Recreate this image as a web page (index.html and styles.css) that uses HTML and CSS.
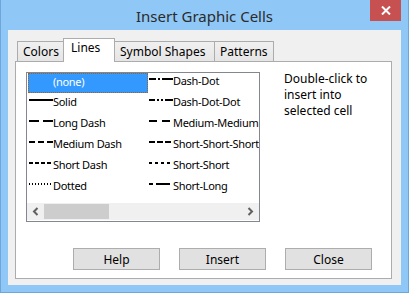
FILE: index.html
```html
<!DOCTYPE html>
<html lang="en">
<head>
  <meta charset="UTF-8" />
  <title>Insert Graphic Cells</title>
  <link rel="stylesheet" href="styles.css">
</head>
<body>
  <div class="window">
    <div class="titlebar">
      <span></span>
      <div class="title">Insert Graphic Cells</div>
      <div class="close-btn">
        <svg width="10" height="9" viewBox="0 0 10 9"><path d="M1 0.5 L9 8.5 M9 0.5 L1 8.5" stroke="#fff" stroke-width="2"/></svg>
      </div>
    </div>
    <div class="client">
      <div class="tabs">
        <div class="tab tab-colors">Colors</div>
        <div class="tab tab-lines active">Lines</div>
        <div class="tab tab-symbols">Symbol Shapes</div>
        <div class="tab tab-patterns">Patterns</div>
      </div>
      <div class="panel">
        <div class="panel-top">
          <div class="listbox">
            <div class="list-cols">
              <div class="col">
                <div class="item selected"><span class="sample"></span>(none)</div>
                <div class="item"><svg class="sample" width="25" height="4"><line x1="1" y1="2" x2="25" y2="2" stroke="#000" stroke-width="2"/></svg>Solid</div>
                <div class="item"><svg class="sample" width="25" height="4"><line x1="1" y1="2" x2="25" y2="2" stroke="#000" stroke-width="2" stroke-dasharray="10 4"/></svg>Long Dash</div>
                <div class="item"><svg class="sample" width="25" height="4"><line x1="1" y1="2" x2="25" y2="2" stroke="#000" stroke-width="2" stroke-dasharray="6 3"/></svg>Medium Dash</div>
                <div class="item"><svg class="sample" width="25" height="4"><line x1="1" y1="2" x2="25" y2="2" stroke="#000" stroke-width="2" stroke-dasharray="4 2"/></svg>Short Dash</div>
                <div class="item"><svg class="sample" width="25" height="4"><line x1="1" y1="2" x2="25" y2="2" stroke="#000" stroke-width="2" stroke-dasharray="1 2"/></svg>Dotted</div>
              </div>
              <div class="col">
                <div class="item"><svg class="sample" width="25" height="4"><line x1="1" y1="2" x2="25" y2="2" stroke="#000" stroke-width="2" stroke-dasharray="7 2 2 2 11"/></svg>Dash-Dot</div>
                <div class="item"><svg class="sample" width="25" height="4"><line x1="1" y1="2" x2="25" y2="2" stroke="#000" stroke-width="2" stroke-dasharray="6 2 2 2 2 2 10"/></svg>Dash-Dot-Dot</div>
                <div class="item"><svg class="sample" width="25" height="4"><line x1="1" y1="2" x2="25" y2="2" stroke="#000" stroke-width="2" stroke-dasharray="8 5"/></svg>Medium-Medium</div>
                <div class="item"><svg class="sample" width="25" height="4"><line x1="1" y1="2" x2="25" y2="2" stroke="#000" stroke-width="2" stroke-dasharray="6 2"/></svg>Short-Short-Short</div>
                <div class="item"><svg class="sample" width="25" height="4"><line x1="1" y1="2" x2="25" y2="2" stroke="#000" stroke-width="2" stroke-dasharray="3 3"/></svg>Short-Short</div>
                <div class="item"><svg class="sample" width="25" height="4"><line x1="1" y1="2" x2="25" y2="2" stroke="#000" stroke-width="2" stroke-dasharray="4 3 14 4"/></svg>Short-Long</div>
              </div>
            </div>
            <div class="hscroll">
              <div class="arrow">
                <svg width="7" height="9" viewBox="0 0 7 9"><path d="M5.5 1 L2 4.5 L5.5 8" fill="none" stroke="#606060" stroke-width="2"/></svg>
              </div>
              <div class="track"><div class="thumb"></div></div>
              <div class="arrow">
                <svg width="7" height="9" viewBox="0 0 7 9"><path d="M1.5 1 L5 4.5 L1.5 8" fill="none" stroke="#606060" stroke-width="2"/></svg>
              </div>
            </div>
          </div>
          <p class="hint">Double-click to insert into selected cell</p>
        </div>
        <div class="buttons">
          <div class="btn">Help</div>
          <div class="btn">Insert</div>
          <div class="btn">Close</div>
        </div>
      </div>
    </div>
  </div>
</body>
</html>
```

FILE: styles.css
```css
* {
  box-sizing: border-box;
  margin: 0;
  padding: 0;
}

body {
  font-family: 'Noto Sans', 'Liberation Sans', sans-serif;
  font-size: 12px;
  color: #000;
  background: #8fc7f6;
}

.window {
  width: 409px;
  height: 293px;
  background: #8fc7f6;
  border: 1px solid #6fa6d9;
  border-top: none;
  padding: 0 7px 7px 7px;
}

.titlebar {
  height: 30px;
  display: grid;
  grid-template-columns: 1fr auto 1fr;
  align-items: start;
}

.title {
  font-size: 15px;
  color: #2b2b2b;
  padding-top: 6px;
  line-height: 20px;
}

.close-btn {
  justify-self: end;
  width: 31px;
  height: 21px;
  background: #c75050;
  display: flex;
  align-items: center;
  justify-content: center;
}

.client {
  height: 255px;
  background: #f0f0f0;
  padding: 9px 9px 0 7px;
}

.tabs {
  display: flex;
  align-items: flex-end;
  padding-left: 2px;
  height: 23px;
  margin-bottom: -1px;
  position: relative;
  z-index: 1;
}

.tab {
  height: 20px;
  border: 1px solid #acacac;
  border-bottom: none;
  background: linear-gradient(#f0f0f0, #e5e5e5);
  line-height: 18px;
  padding: 1px 0 0 5px;
  margin-bottom: 1px;
}

.tab + .tab {
  margin-left: -1px;
}

.tab-colors { width: 47px; }
.tab-lines { width: 52px; }
.tab-symbols { width: 101px; }
.tab-patterns { width: 60px; }

.tab.active {
  height: 24px;
  background: #fff;
  margin-bottom: 0;
  line-height: 18px;
  padding: 0 0 0 7px;
  position: relative;
  z-index: 2;
}

.panel {
  width: 377px;
  height: 218px;
  background: #fff;
  border: 1px solid #acacac;
  padding: 10px 0 0 10px;
}

.panel-top {
  display: flex;
  gap: 24px;
  height: 176px;
}

.listbox {
  width: 234px;
  height: 150px;
  border: 1px solid #828790;
  padding-left: 1px;
  display: flex;
  flex-direction: column;
}

.list-cols {
  display: flex;
  overflow: hidden;
  height: 130px;
}

.col {
  flex: 0 0 120px;
}

.item {
  height: 21px;
  line-height: 15px;
  font-size: 11px;
  letter-spacing: -0.3px;
  display: flex;
  align-items: flex-start;
  white-space: nowrap;
  overflow: hidden;
}

.item .sample {
  margin-top: 4px;
}

.item.selected {
  height: 20px;
  margin-bottom: 1px;
  padding-top: 1px;
  background: #3399ff;
  color: #fff;
  outline: 1px dotted #a06020;
  outline-offset: -1px;
}

.sample {
  display: block;
  flex: 0 0 25px;
  width: 25px;
}

.hscroll {
  height: 17px;
  margin-top: auto;
  margin-bottom: 1px;
  margin-left: -1px;
  background: #f0f0f0;
  display: flex;
}

.arrow {
  width: 17px;
  display: flex;
  align-items: center;
  justify-content: center;
}

.track {
  flex: 1;
  padding: 1px 0;
}

.thumb {
  width: 65px;
  height: 15px;
  background: #cdcdcd;
}

.hint {
  line-height: 16px;
  width: 90px;
  margin-top: -1px;
}

.buttons {
  display: flex;
  gap: 19px;
  padding-left: 47px;
}

.btn {
  width: 87px;
  height: 22px;
  background: #e1e1e1;
  border: 1px solid #adadad;
  display: flex;
  align-items: center;
  justify-content: center;
}
```
